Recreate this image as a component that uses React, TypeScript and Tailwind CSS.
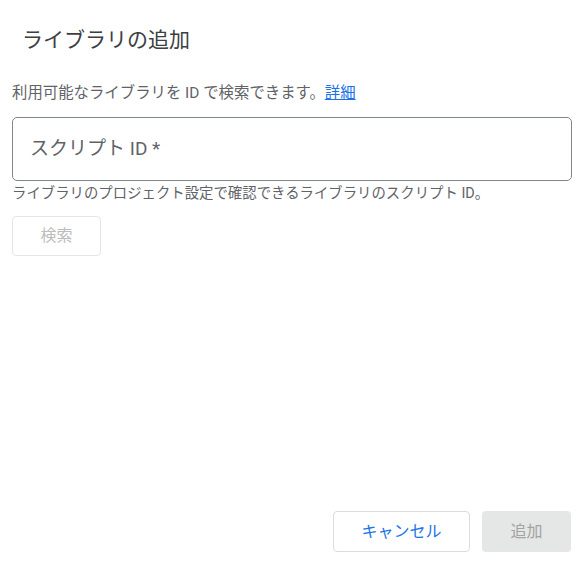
import React from "react";

const AddLibraryDialog = () => {
  return (
    <div
      className="h-screen w-full bg-white flex flex-col"
      style={{ fontFamily: "Roboto, 'Noto Sans CJK JP', sans-serif" }}
    >
      {/* Title */}
      <h1 className="mt-[26px] pl-[22px] text-[21px] leading-[28px] text-[#3c4043] font-normal">
        ライブラリの追加
      </h1>

      <div className="px-[12px] pr-[13px]">
        <p className="mt-[29px] text-[15.4px] leading-[20px] text-[#5f6368]">
          利用可能なライブラリを ID で検索できます。
          <a href="#" className="text-[#1a73e8] underline">
            詳細
          </a>
        </p>

        {/* Script ID field */}
        <div className="mt-[14px] h-[64px] rounded-[5px] border border-[#80868b] flex items-center px-[17px]">
          <input
            className="w-full outline-none bg-transparent text-[19px] text-[#202124] placeholder:text-[#5f6368]"
            placeholder="スクリプト ID *"
          />
        </div>
        <p className="mt-[4px] text-[14.4px] leading-[18px] text-[#5f6368]">
          ライブラリのプロジェクト設定で確認できるライブラリのスクリプト ID。
        </p>

        <button
          disabled
          className="mt-[13px] h-[40px] w-[89px] rounded-[4px] border border-[#e6e6e6] text-[16px] text-[#bdbdbd]"
        >
          検索
        </button>
      </div>

      {/* Actions */}
      <div className="mt-auto mb-[11px] mr-[14px] flex justify-end gap-[12px]">
        <button className="h-[41px] w-[137px] rounded-[4px] border border-[#dadce0] text-[16px] text-[#1a73e8]">
          キャンセル
        </button>
        <button
          disabled
          className="h-[41px] w-[89px] rounded-[4px] bg-[#e5e6e6] text-[16px] text-[#a3a3a3]"
        >
          追加
        </button>
      </div>
    </div>
  );
};

export default AddLibraryDialog;
